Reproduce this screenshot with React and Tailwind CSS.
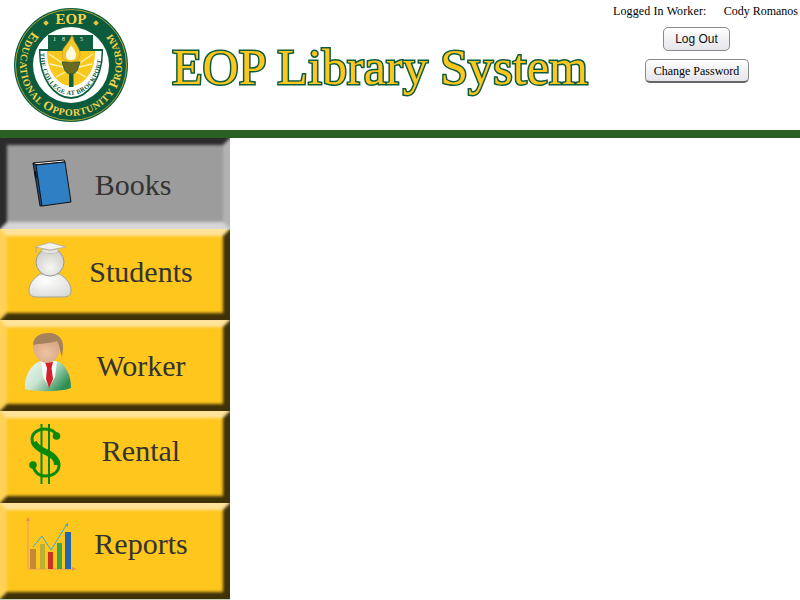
import React from 'react';

const serif = "font-['Liberation_Serif','Times_New_Roman',serif]";

function Seal() {
  return (
    <svg width="116" height="116" viewBox="0 0 116 116" className="block">
      <defs>
        <path id="sealBottom" d="M 19.5 24.5 A 51 51 0 1 0 96.5 24.5" fill="none" />
        <path id="shieldText" d="M 27 46 A 31 42 0 0 0 89 46" fill="none" />
      </defs>
      <circle cx="58" cy="58" r="57" fill="#0c5b3d" />
      <circle cx="58" cy="58" r="55.5" fill="none" stroke="#e6c63a" strokeWidth="0.7" />
      <text fontFamily="Liberation Serif, serif" fontWeight="700" fontSize="15" fill="#f4d34a" textAnchor="middle" x="58" y="16.5">EOP</text>
      <rect x="31" y="14" width="4" height="4" fill="#e6c63a" transform="rotate(45 33 16)" />
      <rect x="81" y="14" width="4" height="4" fill="#e6c63a" transform="rotate(45 83 16)" />
      <text fontFamily="Liberation Serif, serif" fontWeight="700" fontSize="10" fill="#f4d34a">
        <textPath href="#sealBottom" textLength="230" lengthAdjust="spacing">
          <tspan fontSize="13">E</tspan>DUCATIONAL <tspan fontSize="13">O</tspan>PPORTUNITY <tspan fontSize="13">P</tspan>ROGRAM
        </textPath>
      </text>
      <circle cx="58" cy="58" r="38" fill="#ffffff" />
      {/* shield */}
      <path d="M 35 28 L 80 28 L 80 42 L 90 42 L 90 46 A 32 46 0 0 1 26 46 L 26 42 L 35 42 Z" fill="#0f5e40" />
      <path d="M 27.5 44 L 88.5 44 L 88.5 46 A 30.5 44 0 0 1 27.5 46 Z" fill="#ffffff" />
      <path d="M 34 44 L 82 44 L 82 46 A 24 33 0 0 1 34 46 Z" fill="#f9c81e" />
      <path d="M 58 62 L 36 47 M 58 62 L 80 47 M 58 62 L 37 57 M 58 62 L 79 57 M 58 62 L 43 70 M 58 62 L 73 70" stroke="#fff3b0" strokeWidth="1.4" />
      <rect x="35" y="35" width="45" height="9" fill="#0f5e40" />
      <text fontFamily="Liberation Serif, serif" fontSize="6" fill="#e8f0e0" x="58" y="34" textAnchor="middle" letterSpacing="6">1835</text>
      <text fontFamily="Liberation Serif, serif" fontSize="6.4" fontWeight="700" fill="#0c5b3d">
        <textPath href="#shieldText" textLength="108" lengthAdjust="spacing">THE COLLEGE AT BROCKPORT</textPath>
      </text>
      {/* torch */}
      <rect x="56" y="66" width="4.5" height="14" fill="#0f5e40" />
      <path d="M 49 55 L 67 55 L 65 61 C 64 65 61 67 58 67 C 55 67 52 65 51 61 Z" fill="#6b6a22" stroke="#0f5e40" strokeWidth="0.8" />
      <path d="M 59 28 C 60 35 67 40 67 47 C 67 52 64 55 58 55 C 52 55 49 52 49 47 C 49 40 56 37 59 28 Z" fill="#f5c62a" stroke="#c98f10" strokeWidth="0.6" />
      <path d="M 58 38 C 60 41 63 44 63 48 C 63 52 61 53 58 53 C 55 53 53 52 53 48 C 53 44 57 41 58 38 Z" fill="#fffbe0" />
    </svg>
  );
}

function BookIcon() {
  return (
    <svg width="44" height="50" viewBox="0 0 44 50" className="block">
      <path d="M 2 4 L 33 1 L 34 3 L 3 6 Z" fill="#f4f4f4" stroke="#111" strokeWidth="1" />
      <path d="M 2 4 L 9 47 L 12 46.5 L 6 6 Z" fill="#1f4d80" stroke="#111" strokeWidth="1" />
      <path d="M 5 6 L 34 3 L 40 43 L 11 47 Z" fill="#2e7fc4" stroke="#111" strokeWidth="1" />
      <path d="M 3 12 L 5 12 L 6 19 L 4 19 Z" fill="#111" />
    </svg>
  );
}

function StudentIcon() {
  return (
    <svg width="44" height="58" viewBox="0 0 44 58" className="block">
      <defs>
        <radialGradient id="bodyGrad" cx="0.4" cy="0.3" r="0.9">
          <stop offset="0" stopColor="#ffffff" />
          <stop offset="1" stopColor="#d4d4d0" />
        </radialGradient>
        <radialGradient id="headGrad" cx="0.5" cy="0.7" r="0.8">
          <stop offset="0" stopColor="#f6f6f4" />
          <stop offset="1" stopColor="#c4c4c0" />
        </radialGradient>
      </defs>
      <path d="M 12 32 C 5 37 1 42 1 49 C 1 54 5 55 10 55 L 34 55 C 39 55 43 54 43 49 C 43 42 39 37 32 32 Z" fill="url(#bodyGrad)" stroke="#a2a29c" strokeWidth="1" />
      <circle cx="22" cy="20" r="14" fill="url(#headGrad)" stroke="#9a9a94" strokeWidth="1" />
      <path d="M 7 5 L 22 0.5 L 38 5 L 22 8 Z" fill="#f2f2ee" stroke="#b0b0a8" strokeWidth="0.8" />
      <path d="M 14 7 L 14 10 C 18 12 26 12 30 10 L 30 7 L 22 8.5 Z" fill="#e6e6e0" stroke="#b0b0a8" strokeWidth="0.6" />
      <path d="M 8 5 L 8 11" stroke="#a8a8a0" strokeWidth="1" />
    </svg>
  );
}

function WorkerIcon() {
  return (
    <svg width="48" height="60" viewBox="0 0 48 60" className="block">
      <defs>
        <linearGradient id="suitGrad" x1="0" y1="0" x2="1" y2="0.6">
          <stop offset="0" stopColor="#f0f8f2" />
          <stop offset="0.5" stopColor="#c8e4d0" />
          <stop offset="1" stopColor="#2e8f55" />
        </linearGradient>
        <radialGradient id="faceGrad" cx="0.5" cy="0.55" r="0.6">
          <stop offset="0" stopColor="#ecc4a4" />
          <stop offset="1" stopColor="#d9a682" />
        </radialGradient>
      </defs>
      <path d="M 1 57 C 0 42 9 31 17 29 L 33 29 C 41 32 47 42 47 56 C 38 60 10 60 1 57 Z" fill="url(#suitGrad)" />
      <path d="M 17 29 L 33 29 L 31 45 L 25 55 L 19 45 Z" fill="#f8faf8" />
      <path d="M 21 30 L 29 30 L 27.5 36 L 29 47 L 25 56 L 22 47 L 23 36 Z" fill="#d3202c" />
      <path d="M 9 14 C 9 5 15 1 25 1 C 35 1 40 8 39 17 L 38 25 C 36 20 36 13 32 11 C 26 13 16 12 9 14 Z" fill="#a5815c" />
      <path d="M 9 13 C 14 11 26 12 33 9 C 36 13 36 18 35 21 C 33 28 28 31 23 31 C 16 31 9 24 9 13 Z" fill="url(#faceGrad)" />
    </svg>
  );
}

function DollarIcon() {
  return (
    <svg width="34" height="62" viewBox="0 0 34 62" className="block">
      <path d="M 29 12 C 27 7 22 5 17 5 C 10 5 4 9 4 15 C 4 23 12 26 18 29 C 25 32 31 34 31 41 C 31 48 25 52 17 52 C 11 52 6 48 5 41" fill="none" stroke="#0a8a0a" strokeWidth="3" />
      <path d="M 6 18 C 8 24 14 26 18 28 C 24 31 29 34 29 41" fill="none" stroke="#0a8a0a" strokeWidth="6" />
      <circle cx="28.5" cy="12" r="3.8" fill="#0a8a0a" />
      <circle cx="5" cy="41" r="3.8" fill="#0a8a0a" />
      <path d="M 13.5 0 L 13.5 60 M 21 0 L 21 60" stroke="#0a8a0a" strokeWidth="2" />
    </svg>
  );
}

function ReportsIcon() {
  return (
    <svg width="50" height="56" viewBox="0 0 50 56" className="block">
      <path d="M 2 2 L 2 53 L 49 53" fill="none" stroke="#f59a62" strokeWidth="1.2" />
      <path d="M 0 5 L 2 1 L 4 5 Z M 46 51 L 50 53 L 46 55 Z" fill="#f08a56" />
      <rect x="4" y="33" width="6" height="20" fill="#c28a34" />
      <rect x="14" y="28" width="5" height="25" fill="#bcb034" />
      <rect x="22" y="36" width="5" height="17" fill="#c8341e" />
      <rect x="31" y="27" width="5" height="26" fill="#3aa84a" />
      <rect x="39" y="16" width="6" height="37" fill="#2366ac" />
      <path d="M 7 31 L 16 20 L 25 34 L 41 8" fill="none" stroke="#2ea8e8" strokeWidth="1" />
      <path d="M 39 9 L 42 7 L 42 11 Z" fill="#2ea8e8" />
    </svg>
  );
}

const menu = [
  { label: 'Books', icon: <BookIcon />, iconBox: 'w-[88px] pl-[31px]', labelBox: 'pt-[2px]', height: 'h-[91px]', active: true },
  { label: 'Students', icon: <StudentIcon />, iconBox: 'w-[96px] pl-[28px] pb-[8px]', labelBox: 'pb-[6px]', height: 'h-[91px]' },
  { label: 'Worker', icon: <WorkerIcon />, iconBox: 'w-[96px] pl-[24px] pb-[8px]', labelBox: '', height: 'h-[91px]' },
  { label: 'Rental', icon: <DollarIcon />, iconBox: 'w-[96px] pl-[28px] pb-[4px]', labelBox: 'pb-[12px]', height: 'h-[92px]' },
  { label: 'Reports', icon: <ReportsIcon />, iconBox: 'w-[96px] pl-[26px] pb-[14px]', labelBox: 'pb-[14px]', height: 'h-[96px]' },
];

function MenuButton({ item }) {
  // soft bevel: mitred borders on a blurred layer that spills past the button edge
  const bevel = item.active
    ? 'border-t-[#2b2b2b] border-l-[#2b2b2b] border-r-[#b2b2b2] border-b-[#d6d6d6]'
    : 'border-t-[#ffe39b] border-l-[#ffd257] border-r-[#3f3208] border-b-[#3f3208]';
  return (
    <div className={`relative overflow-hidden flex items-center w-full text-[30px] leading-none text-[#333] ${item.height} ${item.active ? 'bg-[#9c9c9c]' : 'bg-[#ffc61e]'}`}>
      <div className={`absolute -inset-[3px] border-[10px] blur-[1.5px] ${bevel}`} />
      <div className={`relative shrink-0 ${item.iconBox}`}>{item.icon}</div>
      <div className={`relative flex justify-center w-[90px] whitespace-nowrap ${item.labelBox}`}>{item.label}</div>
    </div>
  );
}

export default function App() {
  return (
    <div className={`w-[800px] h-[600px] overflow-hidden bg-white ${serif}`}>
      <div className="flex h-[130px]">
        <div className="shrink-0 w-[172px] pl-[13px] pt-[7px]">
          <Seal />
        </div>
        <div className="shrink-0 w-[441px] pt-[36px] text-[50px] leading-[62px] tracking-[0.06px] whitespace-nowrap text-[#ffc61e] [-webkit-text-stroke:3px_#0c5c3e] [paint-order:stroke_fill]">
          EOP Library System
        </div>
        <div className="w-[187px] pt-1 text-[12px] leading-[14px] text-black">
          <div className="flex justify-between pr-[2px] whitespace-nowrap">
            <span className="tracking-[0.12px]">Logged In Worker:</span>
            <span>Cody Romanos</span>
          </div>
          <div className="flex flex-col items-center pr-[20px]">
            <button className="mt-[9px] w-[67px] h-[24px] rounded-[5px] border border-[#8a8a8a] bg-gradient-to-b from-[#ffffff] to-[#e4e4ea] font-['Liberation_Sans',Arial,sans-serif] text-[12px] text-[#111]">
              Log Out
            </button>
            <button className="mt-[8px] w-[104px] h-[24px] rounded-[5px] border border-[#8a8a8a] border-b-2 border-b-[#666] bg-gradient-to-b from-[#ffffff] to-[#e4e4ea] text-[12px] text-black">
              Change Password
            </button>
          </div>
        </div>
      </div>
      <div className="h-[8px] bg-[#2c5f23]" />
      <div className="w-[230px]">
        {menu.map((item) => (
          <MenuButton key={item.label} item={item} />
        ))}
        <div className="h-[1px] bg-[#c5d0b8]" />
      </div>
    </div>
  );
}
